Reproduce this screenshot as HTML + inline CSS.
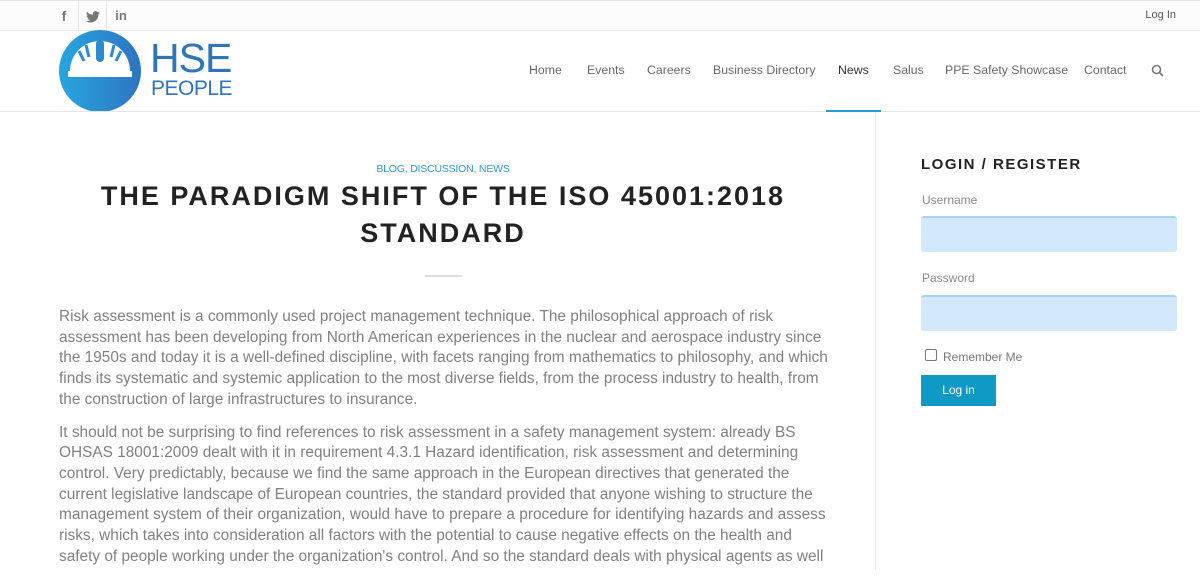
<!DOCTYPE html>
<html><head><meta charset="utf-8"><style>
*{margin:0;padding:0;box-sizing:border-box}
body{width:1200px;height:570px;overflow:hidden;background:#fff;font-family:"Liberation Sans",sans-serif;position:relative}
.top{position:absolute;left:0;top:0;width:1200px;height:31px;background:#fcfcfc;border-top:1px solid #e4e4e4;border-bottom:1px solid #e8e8e8}
.soc{position:absolute;top:0;height:30px;width:28px;text-align:center;line-height:30px;color:#777;font-size:14px;font-weight:bold}
.sep{position:absolute;top:0;width:1px;height:30px;background:#e4e4e4}
.login{position:absolute;right:24px;top:8px;font-size:11px;color:#555}
.hdr{position:absolute;top:111px;left:0;width:1200px;height:1px;background:#e6e6e6}
.nav{position:absolute;top:63px;font-size:12.3px;color:#666}
.nav span{position:absolute;white-space:nowrap}
.sb{position:absolute;left:875px;top:112px;width:1px;height:458px;background:#e6e6e6}
.title{position:absolute;left:60px;width:766px;top:178px;text-align:center;font-size:27px;font-weight:bold;letter-spacing:2px;line-height:37px;color:#222}
.cat{position:absolute;left:60px;width:766px;top:163px;text-align:center;font-size:10.5px;color:#2a9ad1;letter-spacing:-0.2px}
.body{position:absolute;left:59px;top:307px;font-size:15.4px;line-height:20.7px;color:#808080;white-space:nowrap}
.body p{margin-bottom:12px}
label{position:absolute;left:922px;font-size:12px;color:#888}
.inp{position:absolute;left:921px;width:256px;height:36px;background:#d2e9fc;border-radius:3px;border-top:2px solid #a9d2f2}
</style></head><body>
<div class="top">
<div class="soc" style="left:50px">f</div><div class="sep" style="left:78px"></div>
<div class="soc" style="left:79px">
<svg width="14" height="12" viewBox="0 0 24 20" style="vertical-align:middle"><path fill="#777" d="M24 2.4a10 10 0 0 1-2.8.8A5 5 0 0 0 23.3.4a10 10 0 0 1-3.1 1.2A4.9 4.9 0 0 0 11.8 6 14 14 0 0 1 1.7.9a4.9 4.9 0 0 0 1.5 6.6 4.900 4.900 0 0 1-2.2-.6 4.9 4.9 0 0 0 3.900 4.8 5 5 0 0 1-2.2.1 4.9 4.9 0 0 0 4.6 3.4A9.9 9.9 0 0 1 0 17.2 14 14 0 0 0 7.5 19.4c9 0 14-7.5 14-14v-.6A10 10 0 0 0 24 2.4z"/></svg></div>
<div class="sep" style="left:106px"></div>
<div class="soc" style="left:107px;font-size:13px">in</div>
<div class="login">Log In</div>
</div>
<svg style="position:absolute;left:59px;top:30px" width="82" height="82" viewBox="0 0 82 82">
<defs><linearGradient id="g" x1="0" x2="1"><stop offset="0" stop-color="#27a6e0"/><stop offset="1" stop-color="#2f74c0"/></linearGradient></defs>
<circle cx="41" cy="41" r="41" fill="url(#g)"/>
<path d="M11 41 A30 30 0 0 1 71 41 H73 V47 H9 V41 Z" fill="#fff"/>
<path d="M27 15 L30 27 M55 15 L52 27 M20 21 L25 31 M62 21 L57 31" stroke="#2b8ad0" stroke-width="3"/>
<rect x="37" y="10" width="8" height="22" rx="4" fill="#2b8ad0"/>
</svg>
<div style="position:absolute;left:150px;top:38px;font-size:41px;color:#2e75bd;letter-spacing:-1px;line-height:40px">HSE</div>
<div style="position:absolute;left:151px;top:78px;font-size:21px;color:#2e75bd;line-height:22px;letter-spacing:-0.5px">PEOPLE</div>
<div class="nav">
<span style="left:529px">Home</span><span style="left:587px">Events</span><span style="left:647px">Careers</span><span style="left:713px">Business Directory</span><span style="left:838px;color:#333">News</span><span style="left:893px">Salus</span><span style="left:945px">PPE Safety Showcase</span><span style="left:1084px">Contact</span>
</div>
<svg style="position:absolute;left:1151px;top:64px" width="13" height="13" viewBox="0 0 13 13"><circle cx="5.5" cy="5.5" r="4" stroke="#777" stroke-width="1.6" fill="none"/><path d="M8.5 8.5 L12 12" stroke="#777" stroke-width="1.8"/></svg>
<div class="hdr"></div>
<div style="position:absolute;left:826px;top:110px;width:55px;height:2px;background:#2a9ad1"></div>
<div class="sb"></div>
<div class="cat">BLOG, DISCUSSION, NEWS</div>
<div class="title">THE PARADIGM SHIFT OF THE ISO 45001:2018<br>STANDARD</div>
<div style="position:absolute;left:425px;top:275px;width:37px;height:2px;background:#ddd"></div>
<div class="body">
<p>Risk assessment is a commonly used project management technique. The philosophical approach of risk<br>assessment has been developing from North American experiences in the nuclear and aerospace industry since<br>the 1950s and today it is a well-defined discipline, with facets ranging from mathematics to philosophy, and which<br>finds its systematic and systemic application to the most diverse fields, from the process industry to health, from<br>the construction of large infrastructures to insurance.</p>
<p>It should not be surprising to find references to risk assessment in a safety management system: already BS<br>OHSAS 18001:2009 dealt with it in requirement 4.3.1 Hazard identification, risk assessment and determining<br>control. Very predictably, because we find the same approach in the European directives that generated the<br>current legislative landscape of European countries, the standard provided that anyone wishing to structure the<br>management system of their organization, would have to prepare a procedure for identifying hazards and assess<br>risks, which takes into consideration all factors with the potential to cause negative effects on the health and<br>safety of people working under the organization's control. And so the standard deals with physical agents as well</p>
</div>
<div style="position:absolute;left:921px;top:156px;font-size:15px;font-weight:bold;letter-spacing:1.5px;color:#222">LOGIN / REGISTER</div>
<label style="top:193px">Username</label>
<div class="inp" style="top:216px"></div>
<label style="top:271px">Password</label>
<div class="inp" style="top:295px"></div>
<div style="position:absolute;left:925px;top:349px;width:12px;height:12px;border:1px solid #777;border-radius:2px"></div>
<label style="top:350px;left:943px;color:#777">Remember Me</label>
<div style="position:absolute;left:921px;top:375px;width:75px;height:31px;background:#1199c6;color:#fff;font-size:12px;text-align:center;line-height:31px">Log in</div>
</body></html>
